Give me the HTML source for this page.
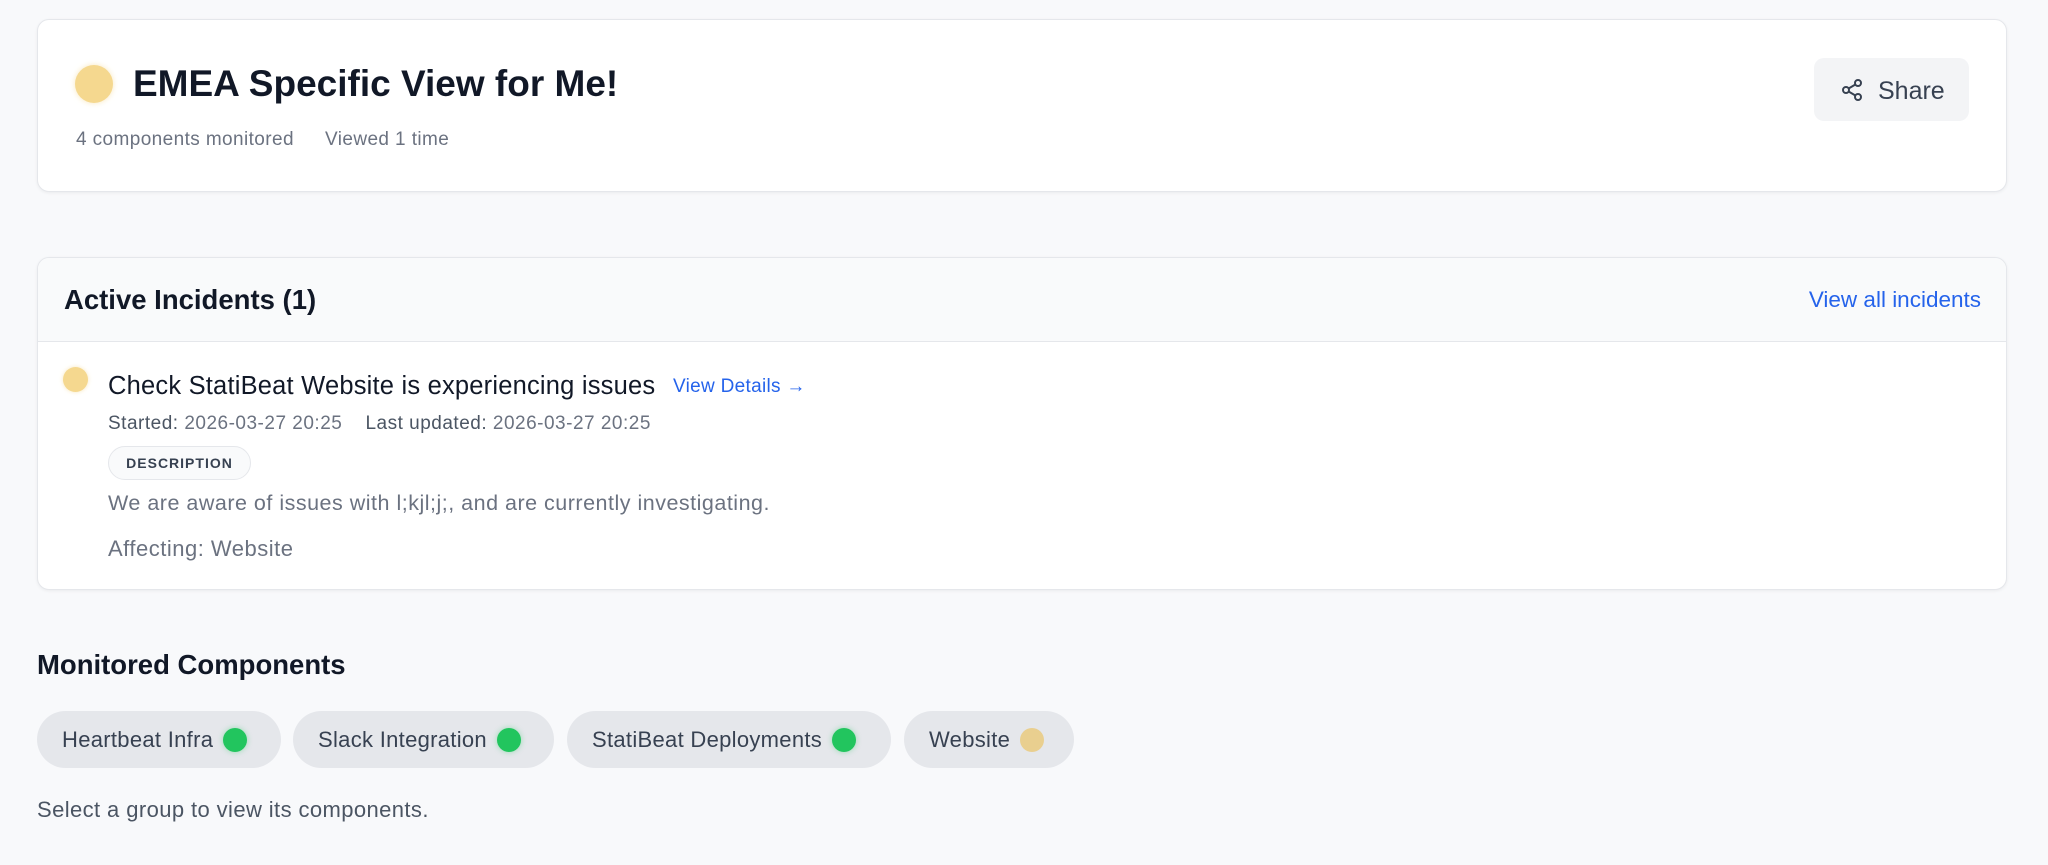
<!DOCTYPE html>
<html><head><meta charset="utf-8"><style>
*{box-sizing:border-box;margin:0;padding:0}
body{width:2048px;height:865px;background:#f8f9fb;font-family:"Liberation Sans",sans-serif;color:#111827;position:relative;overflow:hidden}
.card{position:absolute;left:37px;width:1970px;background:#fff;border:1px solid #e5e7eb;border-radius:12px;box-shadow:0 1px 3px rgba(0,0,0,.06)}
.abs{position:absolute;white-space:nowrap}
.dot{position:absolute;border-radius:50%}
.pill{position:absolute;top:711px;height:57px;background:#e5e7eb;border-radius:29px;font-size:22px;letter-spacing:.3px;color:#374151;display:flex;align-items:center;padding-left:25px}
.pill i{display:inline-block;width:24px;height:24px;border-radius:50%;background:#22c55e;margin-left:10px;box-shadow:0 0 6px rgba(34,197,94,.4)}
</style></head><body>
<div class="card" style="top:19px;height:173px"></div>
<div class="dot" style="left:75px;top:65px;width:38px;height:38px;background:#f5d88f;box-shadow:0 0 6px rgba(245,216,143,.6)"></div>
<div class="abs" style="left:133px;top:61px;font-size:37px;font-weight:bold;color:#111827;line-height:46px">EMEA Specific View for Me!</div>
<div class="abs" style="left:76px;top:128px;font-size:19px;letter-spacing:.4px;color:#6b7280;line-height:24px">4 components monitored</div>
<div class="abs" style="left:325px;top:128px;font-size:19px;letter-spacing:.4px;color:#6b7280;line-height:24px">Viewed 1 time</div>
<div class="abs" style="left:1814px;top:58px;width:155px;height:63px;background:#f3f4f6;border-radius:10px"></div>
<svg class="abs" style="left:1840px;top:78px" width="24" height="24" viewBox="0 0 24 24" fill="none" stroke="#374151" stroke-width="2"><circle cx="18" cy="5" r="3"/><circle cx="6" cy="12" r="3"/><circle cx="18" cy="19" r="3"/><path d="M8.6 13.5l6.8 4M15.4 6.5l-6.8 4"/></svg>
<div class="abs" style="left:1878px;top:76px;font-size:25px;color:#374151;line-height:30px">Share</div>

<div class="card" style="top:257px;height:333px;overflow:hidden"><div style="height:84px;background:#f9fafb;border-bottom:1px solid #e5e7eb"></div></div>
<div class="abs" style="left:64px;top:283px;font-size:27.5px;font-weight:bold;line-height:34px">Active Incidents (1)</div>
<div class="abs" style="right:67px;top:286px;font-size:22.5px;color:#2563eb;line-height:28px">View all incidents</div>
<div class="dot" style="left:63px;top:367px;width:25px;height:25px;background:#f5d88f;box-shadow:0 0 4px rgba(245,216,143,.6)"></div>
<div class="abs" style="left:108px;top:371px;font-size:25.5px;letter-spacing:.2px;line-height:30px;color:#111827">Check StatiBeat Website is experiencing issues</div>
<div class="abs" style="left:673px;top:375px;font-size:19px;letter-spacing:.3px;line-height:24px;color:#2563eb">View Details →</div>
<div class="abs" style="left:108px;top:412px;font-size:19px;letter-spacing:.5px;line-height:24px;color:#4b5563">Started: <span style="color:#6b7280">2026-03-27 20:25</span>&nbsp;&nbsp;&nbsp; Last updated: <span style="color:#6b7280">2026-03-27 20:25</span></div>
<div class="abs" style="left:108px;top:446px;width:143px;height:34px;border:1px solid #e5e7eb;background:#f9fafb;border-radius:17px;font-size:14px;font-weight:bold;letter-spacing:1px;color:#374151;text-align:center;line-height:32px">DESCRIPTION</div>
<div class="abs" style="left:108px;top:489px;font-size:21.5px;letter-spacing:.5px;line-height:28px;color:#6b7280">We are aware of issues with l;kjl;j;, and are currently investigating.</div>
<div class="abs" style="left:108px;top:535px;font-size:22px;letter-spacing:.5px;line-height:28px;color:#6b7280">Affecting: Website</div>

<div class="abs" style="left:37px;top:648px;font-size:27.5px;font-weight:bold;line-height:34px">Monitored Components</div>
<div class="pill" style="left:37px;width:244px">Heartbeat Infra<i></i></div>
<div class="pill" style="left:293px;width:261px">Slack Integration<i></i></div>
<div class="pill" style="left:567px;width:324px">StatiBeat Deployments<i></i></div>
<div class="pill" style="left:904px;width:170px">Website<i style="background:#e9cf8f;box-shadow:none"></i></div>
<div class="abs" style="left:37px;top:796px;font-size:22px;letter-spacing:.4px;line-height:28px;color:#4b5563">Select a group to view its components.</div>
</body></html>
